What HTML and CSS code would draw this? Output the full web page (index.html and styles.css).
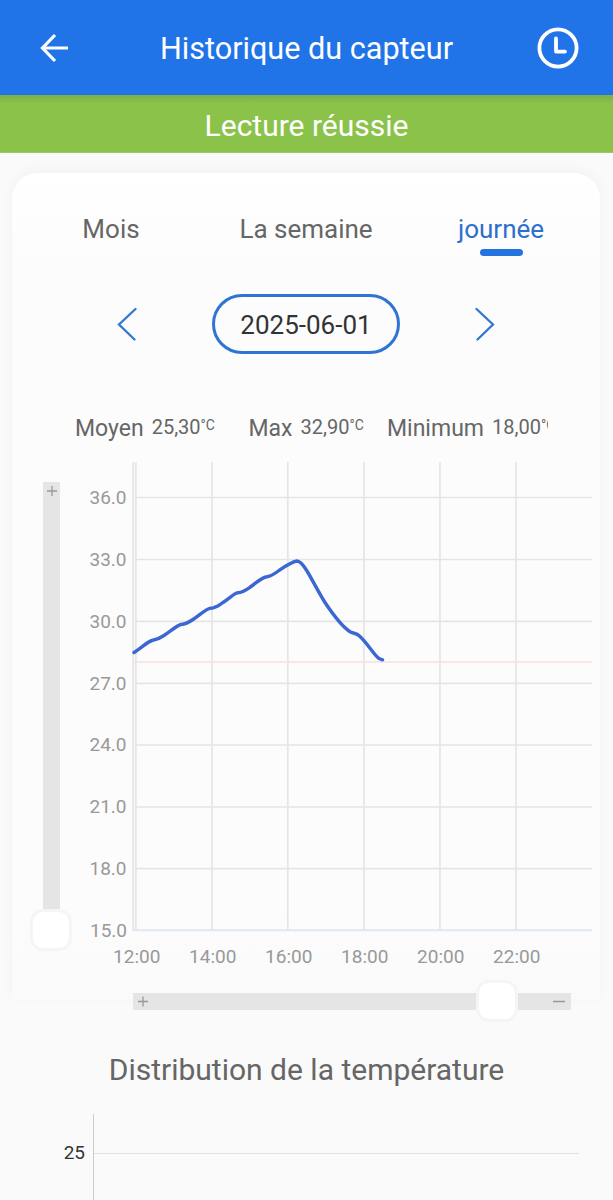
FILE: index.html
```html
<!DOCTYPE html>
<html lang="fr">
<head>
    <meta charset="UTF-8">
    <meta name="viewport" content="width=device-width, initial-scale=1.0">
    <title>Historique du capteur</title>
    <link rel="stylesheet" href="styles.css">
</head>
<body>
    <header class="topbar">
        <svg class="back" width="30" height="30" viewBox="0 0 30 30">
            <path d="M28 15H3M15 2L2.500 15L15 28" />
        </svg>
        <h1>Historique du capteur</h1>
        <svg class="clock" width="42" height="42" viewBox="0 0 42 42">
            <circle cx="21" cy="21" r="18.600" />
            <path d="M19 11.500V24.600H28" />
        </svg>
    </header>
    <div class="status"><span>Lecture réussie</span></div>

    <div class="card">
        <nav class="tabs">
            <a class="tab"><span>Mois</span></a>
            <a class="tab"><span>La semaine</span></a>
            <a class="tab active"><span>journée</span></a>
        </nav>
        <div class="picker">
            <svg class="arrow" width="20" height="34" viewBox="0 0 20 34">
                <path d="M18.500 2L2 17.500L17.500 32.500" />
            </svg>
            <div class="date"><span>2025-06-01</span></div>
            <svg class="arrow" width="20" height="34" viewBox="0 0 20 34">
                <path d="M1.500 2L18 17.500L2.500 32.500" />
            </svg>
        </div>
        <div class="stats">
            <div class="stat avg"><span class="label">Moyen</span><span class="value">25,30</span><span class="unit">°C</span></div>
            <div class="stat max"><span class="label">Max</span><span class="value">32,90</span><span class="unit">°C</span></div>
            <div class="stat min"><span class="label">Minimum</span><span class="value">18,00</span><span class="unit">°C</span></div>
        </div>
        <div class="chart">
            <div class="vslider">
                <div class="track"><svg width="10" height="10" viewBox="0 0 10 10"><path d="M0 5H10M5 0V10" /></svg></div>
                <div class="thumb"></div>
            </div>
            <svg class="plot" width="512" height="512" viewBox="80 460 512 512">
                <g class="grid">
                    <path d="M135 497.500H592M135 559.500H592M135 621.300H592M135 683.300H592M135 745H592M135 807H592M135 868.700H592" />
                    <path d="M133.200 462V930M135.900 462V930M211.900 462V930M287.800 462V930M363.900 462V930M440 462V930M516 462V930" />
                </g>
                <path class="limit" d="M134 662H592" />
                <path class="base" d="M132.500 930.200H592" />
                <path class="curve" d="M134 652.500C142 647.500 147 642 152 640.500C157 639.500 159 639 164 635.500C172 630 177 625.500 181 624.500C186 624 188 623 193 619.500C201 614 205 609.500 210 608.300C216 608 219 605 223 602.500C231 597 234 593.500 238 592.700C243 592.500 246 590 251 586.500C258 581.500 262 577.500 266 577C271 576.500 275 573.500 279 570.500C287 565 292 561.500 297 561C300 561 303 564.500 307 571C313 581 319 593 325 602.500C333 614.500 344 628 350.500 632C354 634 356 632.500 360 636.500C368 644 374 655 379 658.500L382.500 659.800" />
                <g class="ylabels">
                    <text x="126.500" y="504">36.0</text>
                    <text x="126.500" y="566">33.0</text>
                    <text x="126.500" y="627.500">30.0</text>
                    <text x="126.500" y="689.500">27.0</text>
                    <text x="126.500" y="751">24.0</text>
                    <text x="126.500" y="813">21.0</text>
                    <text x="126.500" y="875">18.0</text>
                    <text x="127" y="937">15.0</text>
                </g>
                <g class="xlabels">
                    <text x="136.700" y="963">12:00</text>
                    <text x="212.700" y="963">14:00</text>
                    <text x="288.700" y="963">16:00</text>
                    <text x="364.700" y="963">18:00</text>
                    <text x="440.700" y="963">20:00</text>
                    <text x="516.700" y="963">22:00</text>
                </g>
            </svg>
        </div>
        <div class="hslider">
            <svg class="bar" width="438" height="17" viewBox="0 0 438 17">
                <path d="M5 8.500H15M10 3.500V13.500M420 8.500H432" />
            </svg>
            <div class="thumb"></div>
        </div>
    </div>

    <section class="distribution">
        <h2>Distribution de la température</h2>
        <svg width="613" height="87" viewBox="0 1113 613 87">
            <path class="axis" d="M93.500 1114V1200" />
            <path class="line" d="M94 1153.500H579" />
            <text x="85" y="1159">25</text>
        </svg>
    </section>
</body>
</html>
```
FILE: styles.css
```css
* {
    box-sizing: border-box;
}
body {
    margin: 0;
    height: 1200px;
    overflow: hidden;
    background: #fafafa;
    font-family: Roboto, sans-serif;
    color: #666;
}
svg {
    display: block;
    fill: none;
}
h1, h2 {
    margin: 0;
    font-weight: 400;
    white-space: nowrap;
}
.topbar {
    height: 95px;
    padding: 0 34px 0 40px;
    display: flex;
    align-items: center;
    justify-content: space-between;
    background: #2074e8;
    color: #fff;
}
.topbar h1 {
    font-size: 30.6px;
    line-height: 36px;
    padding: 3px 0 0 6px;
}
.back, .clock {
    stroke: #fff;
    stroke-width: 3.2;
}
.clock {
    stroke-width: 3.8;
    stroke-linecap: round;
    stroke-linejoin: round;
}
.status {
    height: 58px;
    display: flex;
    justify-content: center;
    background: linear-gradient(#7caf49, #8bc34a 9px);
    color: #fff;
    font-size: 30px;
    line-height: 61px;
    border-bottom: 1px solid #9cc76a;
}
.card {
    height: 827px;
    margin: 20px 13px 0 12px;
    border-radius: 26px 26px 0 0;
    background: linear-gradient(#fff, #fcfcfc 90px, #fcfcfc 740px, #fafafa);
    box-shadow: 0 -3px 14px rgba(0, 0, 0, 0.035);
}
.tabs {
    display: grid;
    grid-template-columns: repeat(3, 195px);
    justify-content: center;
    height: 91px;
    padding-top: 40px;
    font-size: 26px;
    line-height: 33px;
}
.tab {
    display: flex;
    flex-direction: column;
    align-items: center;
}
.tab.active {
    color: #2d6fce;
}
.tab.active::after {
    content: "";
    width: 43px;
    height: 7px;
    margin-top: 3px;
    border-radius: 4px;
    background: #2473e0;
}
.picker {
    display: flex;
    justify-content: center;
    align-items: center;
    gap: 75px;
    height: 60px;
    margin-top: 30px;
}
.arrow {
    stroke: #3277ce;
    stroke-width: 2.3;
    stroke-linecap: round;
}
.date {
    width: 188px;
    height: 60px;
    border: 3px solid #2e74d5;
    border-radius: 30px;
    color: #333;
    font-size: 26px;
    line-height: 56px;
    text-align: center;
}
.stats {
    display: flex;
    width: 473px;
    height: 44px;
    margin: 56px 0 0 63px;
    overflow: hidden;
    white-space: nowrap;
}
.stat {
    display: flex;
    flex: none;
}
.stat.avg {
    width: 173.5px;
}
.stat.max {
    width: 138.5px;
}
.label {
    font-size: 23px;
    line-height: 37px;
    margin-right: 8px;
}
.value {
    font-size: 20px;
    line-height: 34px;
}
.unit {
    font-size: 14px;
    line-height: 30px;
}
.chart {
    display: flex;
    gap: 8px;
    margin: 6px 0 0 18px;
}
.vslider {
    display: flex;
    flex-direction: column;
    align-items: center;
    width: 42px;
    padding-top: 22px;
}
.track {
    width: 17px;
    height: 427px;
    padding: 4px 0 0 4px;
    background: #e5e5e5;
}
.track svg, .bar {
    stroke: #999;
    stroke-width: 1.3;
}
.thumb {
    width: 42px;
    height: 42px;
    border: 3px solid #f5f5f5;
    border-radius: 13px;
    background: #fff;
}
.grid {
    stroke: #e5e5e5;
    stroke-width: 1.7;
}
.limit {
    stroke: #fae1da;
    stroke-width: 1.6;
}
.base {
    stroke: #e0e7f0;
    stroke-width: 2;
}
.curve {
    stroke: #3b67d3;
    stroke-width: 3.4;
    stroke-linecap: round;
    stroke-linejoin: round;
}
.ylabels, .xlabels {
    fill: #999;
    font-size: 19px;
}
.ylabels {
    text-anchor: end;
}
.xlabels {
    text-anchor: middle;
}
.hslider {
    display: grid;
    align-items: center;
    width: 438px;
    margin: 8px 0 0 121px;
}
.hslider > * {
    grid-area: 1 / 1;
}
.bar {
    background: #e5e5e5;
}
.hslider .thumb {
    margin-left: 343px;
}
.distribution h2 {
    height: 113px;
    padding-top: 50px;
    text-align: center;
    font-size: 30px;
    line-height: 40px;
}
.axis {
    stroke: #ccc;
}
.line {
    stroke: #e2e2e2;
}
.distribution text {
    fill: #333;
    font-size: 19px;
    text-anchor: end;
}
```
